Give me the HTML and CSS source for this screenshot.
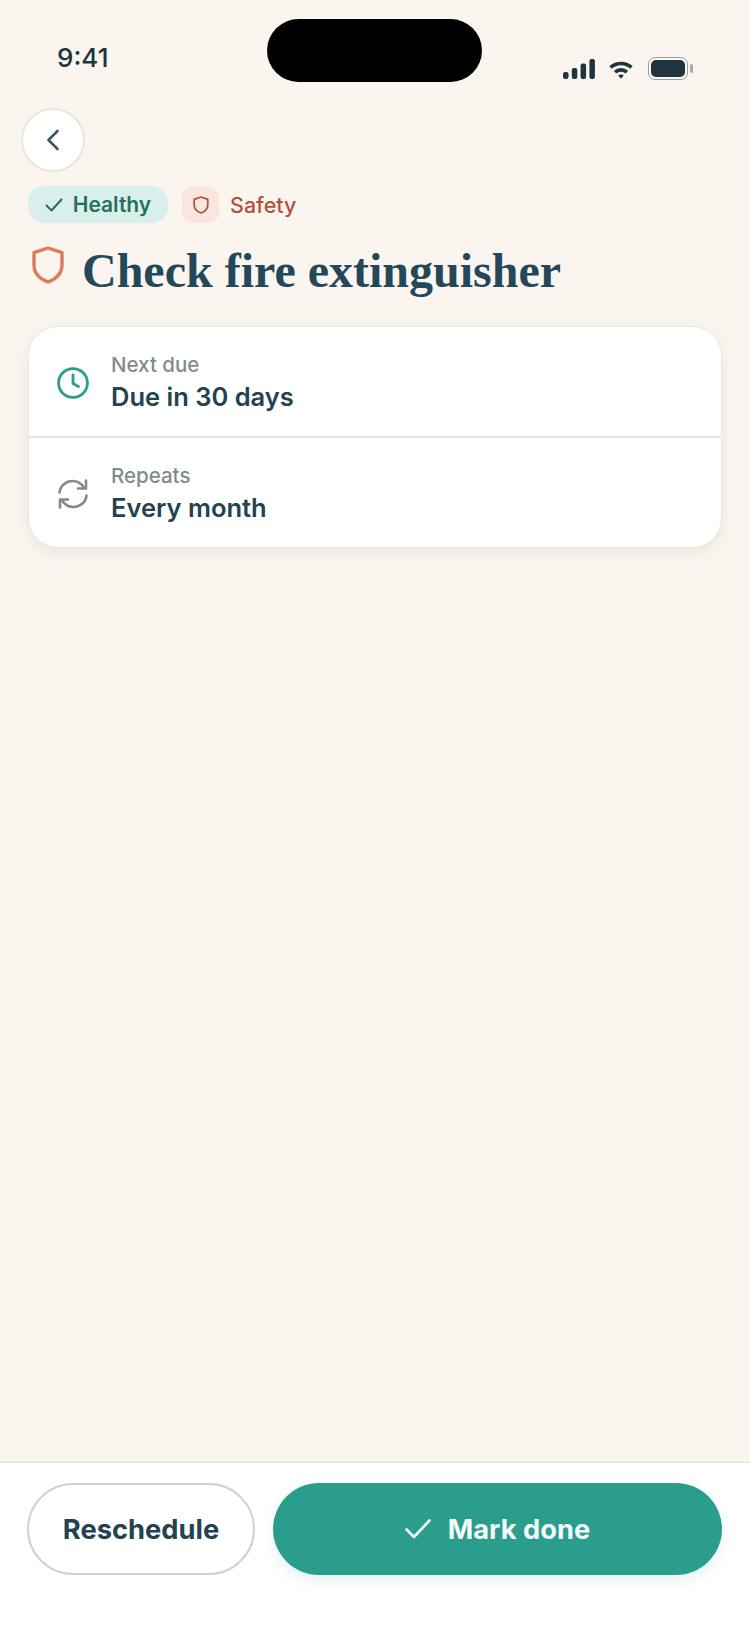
FILE: index.html
```html
<!DOCTYPE html>
<html lang="en">
<head>
<meta charset="utf-8">
<title>Check fire extinguisher</title>
<link rel="stylesheet" href="styles.css">
</head>
<body>
<div class="screen">
  <div class="island"></div>
  <header class="status">
    <span class="time">9:41</span>
    <div class="status-icons">
      <svg class="signal" width="32" height="20" viewBox="0 0 32 20"><g fill="#1f343f"><rect x="0" y="13" width="5.5" height="7" rx="2.2"/><rect x="8.8" y="9" width="5.5" height="11" rx="2"/><rect x="17.6" y="4.5" width="5.5" height="15.5" rx="2"/><rect x="26.4" y="0" width="5.5" height="20" rx="2"/></g></svg>
      <svg class="wifi" width="24" height="18" viewBox="0 0 24 18"><g fill="none" stroke="#1f343f" stroke-width="3.6" stroke-linecap="butt"><path d="M1.5 6.4C7.5 1.1 16.5 1.1 22.5 6.4"/><path d="M6 11.1C9.5 8.1 14.5 8.1 18 11.1"/></g><path d="M9.2 14.4C11 13.2 13 13.2 14.8 14.4L12 17.8Z" fill="#1f343f"/></svg>
      <div class="battery"><div class="battery-fill"></div></div>
      <div class="battery-cap"></div>
    </div>
  </header>

  <main class="content">
    <button class="back" aria-label="Back">
      <svg width="16" height="22" viewBox="0 0 16 22"><path d="M12.5 2L3.5 11L12.5 20" fill="none" stroke="#3f5a64" stroke-width="2.6" stroke-linecap="round" stroke-linejoin="round"/></svg>
    </button>

    <div class="tags">
      <span class="pill">
        <svg width="18" height="14" viewBox="0 0 18 14"><path d="M1.5 7.5L6.5 12.5L16.5 1.5" fill="none" stroke="#24705f" stroke-width="2" stroke-linecap="round" stroke-linejoin="round"/></svg>
        Healthy
      </span>
      <span class="category">
        <span class="cat-tile">
          <svg width="16" height="18" viewBox="0 0 16 18"><path d="M8 1L14.8 3.4V9C14.8 13 12 15.6 8 17C4 15.6 1.2 13 1.2 9V3.4Z" fill="none" stroke="#b0523a" stroke-width="1.7" stroke-linejoin="round"/></svg>
        </span>
        Safety
      </span>
    </div>

    <div class="title-row">
      <svg class="title-icon" width="32" height="38" viewBox="0 0 32 38"><path d="M16 2L30 6.6V19C30 27.5 24.5 32.8 16 36C7.5 32.8 2 27.5 2 19V6.6Z" fill="none" stroke="#dd7b5d" stroke-width="3.4" stroke-linejoin="round"/></svg>
      <h1 class="title">Check fire extinguisher</h1>
    </div>

    <section class="card">
      <div class="row">
        <svg class="row-icon" width="32" height="32" viewBox="0 0 32 32"><circle cx="16" cy="16" r="14.4" fill="none" stroke="#2a9d8c" stroke-width="2.8"/><path d="M16 8V16.5L21.5 19.5" fill="none" stroke="#2a9d8c" stroke-width="2.8" stroke-linecap="round" stroke-linejoin="round"/></svg>
        <div class="row-text">
          <div class="label">Next due</div>
          <div class="value">Due in 30 days</div>
        </div>
      </div>
      <div class="row row-divided">
        <svg class="row-icon" width="32" height="32" viewBox="0 0 32 32"><g fill="none" stroke="#7f8c8c" stroke-width="2.6" stroke-linecap="round" stroke-linejoin="round"><path d="M2.5 14.5C3.2 7.6 9 3 15.5 3C20 3 24 5 27 9.5"/><path d="M29 2.5V10.5H21"/><path d="M29.5 17.5C28.8 24.4 23 29 16.5 29C12 29 8 27 5 22.5"/><path d="M3 29.5V21.5H11"/></g></svg>
        <div class="row-text">
          <div class="label">Repeats</div>
          <div class="value">Every month</div>
        </div>
      </div>
    </section>
  </main>

  <footer class="actions">
    <button class="btn btn-ghost">Reschedule</button>
    <button class="btn btn-primary">
      <svg width="26" height="20" viewBox="0 0 26 20"><path d="M1.5 10.5L9 18L24.5 1.5" fill="none" stroke="#f2fbf9" stroke-width="2.6" stroke-linecap="round" stroke-linejoin="round"/></svg>
      Mark done
    </button>
  </footer>
</div>
</body>
</html>
```
FILE: styles.css
```css
* { box-sizing: border-box; }
html, body { margin: 0; padding: 0; }
body { background: #faf5ef; font-family: Inter, "Liberation Sans", sans-serif; }

.screen {
  position: relative;
  width: 750px;
  height: 1630px;
  display: flex;
  flex-direction: column;
  background: #faf5ef;
  overflow: hidden;
}

.island {
  position: absolute;
  left: 267px;
  top: 19px;
  width: 215px;
  height: 63px;
  border-radius: 32px;
  background: #000;
}

.status {
  height: 108px;
  padding: 43px 57px 0 57px;
  display: flex;
  justify-content: space-between;
  align-items: flex-start;
  flex: none;
}
.time {
  font-size: 26px;
  line-height: 30px;
  font-weight: 500;
  color: #1f343f;
}
.status-icons {
  display: flex;
  align-items: center;
  margin-top: 14px;
}
.wifi { margin-left: 14px; margin-top: 2px; }
.battery {
  width: 40px;
  height: 23px;
  margin-left: 15px;
  padding: 2px;
  border: 1.5px solid #98a0a2;
  border-radius: 7px;
}
.battery-fill {
  width: 100%;
  height: 100%;
  border-radius: 5px;
  background: #1f343f;
}
.battery-cap {
  width: 3px;
  height: 9px;
  margin-left: 2px;
  border-radius: 2px;
  background: #a6adae;
}

.content {
  flex: 1;
  padding: 0 28px;
  display: flex;
  flex-direction: column;
  align-items: stretch;
}

.back {
  width: 64px;
  height: 64px;
  margin-left: -7px;
  padding: 0;
  display: flex;
  align-items: center;
  justify-content: center;
  background: #fff;
  border: 2px solid #ece6dc;
  border-radius: 50%;
}

.tags {
  margin-top: 14px;
  display: flex;
  align-items: center;
  gap: 14px;
}
.pill {
  height: 37px;
  width: 140px;
  display: flex;
  align-items: center;
  justify-content: center;
  gap: 10px;
  border-radius: 16px;
  background: #d9efeb;
  color: #24705f;
  font-size: 21px;
  font-weight: 600;
}
.category {
  display: flex;
  align-items: center;
  gap: 11px;
  color: #b0523a;
  font-size: 21.5px;
  font-weight: 500;
}
.cat-tile {
  width: 37px;
  height: 37px;
  display: flex;
  align-items: center;
  justify-content: center;
  border-radius: 11px;
  background: #fbe6df;
}

.title-row {
  margin-top: 22px;
  display: flex;
  align-items: flex-start;
  gap: 18px;
}
.title-icon { margin-left: 4px; margin-top: 1px; flex: none; }
.title {
  margin: 0;
  font-family: "Liberation Serif", serif;
  font-size: 48px;
  line-height: 52px;
  font-weight: 700;
  color: #24485a;
  white-space: nowrap;
}

.card {
  margin-top: 29px;
  height: 222px;
  background: #fff;
  border-radius: 30px;
  border: 1px solid #efe8dd;
  box-shadow: 0 4px 14px rgba(90, 70, 40, 0.09);
  display: flex;
  flex-direction: column;
}
.row {
  flex: 1;
  display: flex;
  align-items: center;
  gap: 22px;
  padding-left: 28px;
  padding-top: 2px;
}
.row-divided { border-top: 2px solid #ece6dc; }
.row-icon { flex: none; }
.label {
  font-size: 20.5px;
  line-height: 26px;
  font-weight: 500;
  color: #7f8c8c;
}
.value {
  margin-top: 3px;
  font-size: 25.5px;
  line-height: 32px;
  font-weight: 600;
  color: #24424f;
}

.actions {
  flex: none;
  height: 169px;
  padding: 20px 28px 0 27px;
  display: flex;
  gap: 18px;
  align-items: flex-start;
  background: #fff;
  border-top: 2px solid #ece6dc;
}
.btn {
  height: 92px;
  border-radius: 46px;
  font-family: Inter, "Liberation Sans", sans-serif;
  font-size: 27.3px;
  font-weight: 700;
  display: flex;
  align-items: center;
  justify-content: center;
}
.btn-ghost {
  width: 228px;
  flex: none;
  background: #fff;
  border: 2px solid #d8d0c4;
  color: #24424f;
}
.btn-primary {
  flex: 1;
  gap: 17px;
  background: #2a9d8c;
  border: 0;
  color: #f2fbf9;
  box-shadow: 0 6px 14px rgba(42, 157, 140, 0.12);
}
```
